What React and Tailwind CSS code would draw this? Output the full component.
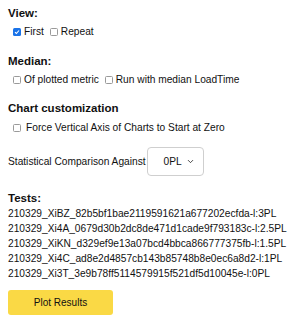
import { ChevronDown } from "lucide-react";

const tests = [
  "210329_XiBZ_82b5bf1bae2119591621a677202ecfda-l:3PL",
  "210329_Xi4A_0679d30b2dc8de471d1cade9f793183c-l:2.5PL",
  "210329_XiKN_d329ef9e13a07bcd4bbca866777375fb-l:1.5PL",
  "210329_Xi4C_ad8e2d4857cb143b85748b8e0ec6a8d2-l:1PL",
  "210329_Xi3T_3e9b78ff5114579915f521df5d10045e-l:0PL",
];

function Check({ on, label, wide }) {
  return (
    <label className={`flex items-center ${wide ? "gap-[5px]" : "gap-[3px]"}`}>
      {on ? (
        <span className="w-[8px] h-[8px] rounded-[1.5px] bg-[#1a73e8] flex items-center justify-center">
          <svg width="6" height="6" viewBox="0 0 6 6">
            <path d="M1 3.1 L2.4 4.5 L5 1.5" fill="none" stroke="white" strokeWidth="1.1" />
          </svg>
        </span>
      ) : (
        <span className="w-[8px] h-[8px] rounded-[1.5px] border border-[#9a9a9a] bg-white" />
      )}
      <span>{label}</span>
    </label>
  );
}

export default function App() {
  return (
    <div className="w-[300px] h-[329px] bg-white px-[8px] pt-[6px] text-[10.2px] leading-[15px] text-[#111] font-['Liberation_Sans',Arial,sans-serif]">
      <div className="font-bold text-[11.5px] leading-[14px]">View:</div>
      <div className="flex gap-[6px] pl-[5px] mt-[4px]">
        <Check on label="First" />
        <Check label="Repeat" />
      </div>

      <div className="font-bold text-[11.5px] leading-[14px] mt-[15px]">Median:</div>
      <div className="flex gap-[6px] pl-[5px] mt-[4px]">
        <Check label="Of plotted metric" />
        <Check label="Run with median LoadTime" />
      </div>

      <div className="font-bold text-[11.5px] leading-[14px] mt-[14px]">Chart customization</div>
      <div className="flex gap-[6px] pl-[5px] mt-[5px]">
        <Check wide label="Force Vertical Axis of Charts to Start at Zero" />
      </div>

      <div className="flex items-center gap-[1px] mt-[12px]">
        <span>Statistical Comparison Against</span>
        <div className="w-[57px] h-[29px] border border-[#cfcfcf] rounded-[4px] flex items-center justify-between pl-[16px] pr-[8px]">
          <span>0PL</span>
          <ChevronDown size={9} strokeWidth={2} />
        </div>
      </div>

      <div className="font-bold text-[11.5px] leading-[14px] mt-[15px]">Tests:</div>
      <div className="mt-[1px]">
        {tests.map((t) => (
          <div key={t}>{t}</div>
        ))}
      </div>

      <button type="button" className="mt-[9px] w-[105px] h-[25px] bg-[#fad945] rounded-[3px] text-[10px]">
        Plot Results
      </button>
    </div>
  );
}
